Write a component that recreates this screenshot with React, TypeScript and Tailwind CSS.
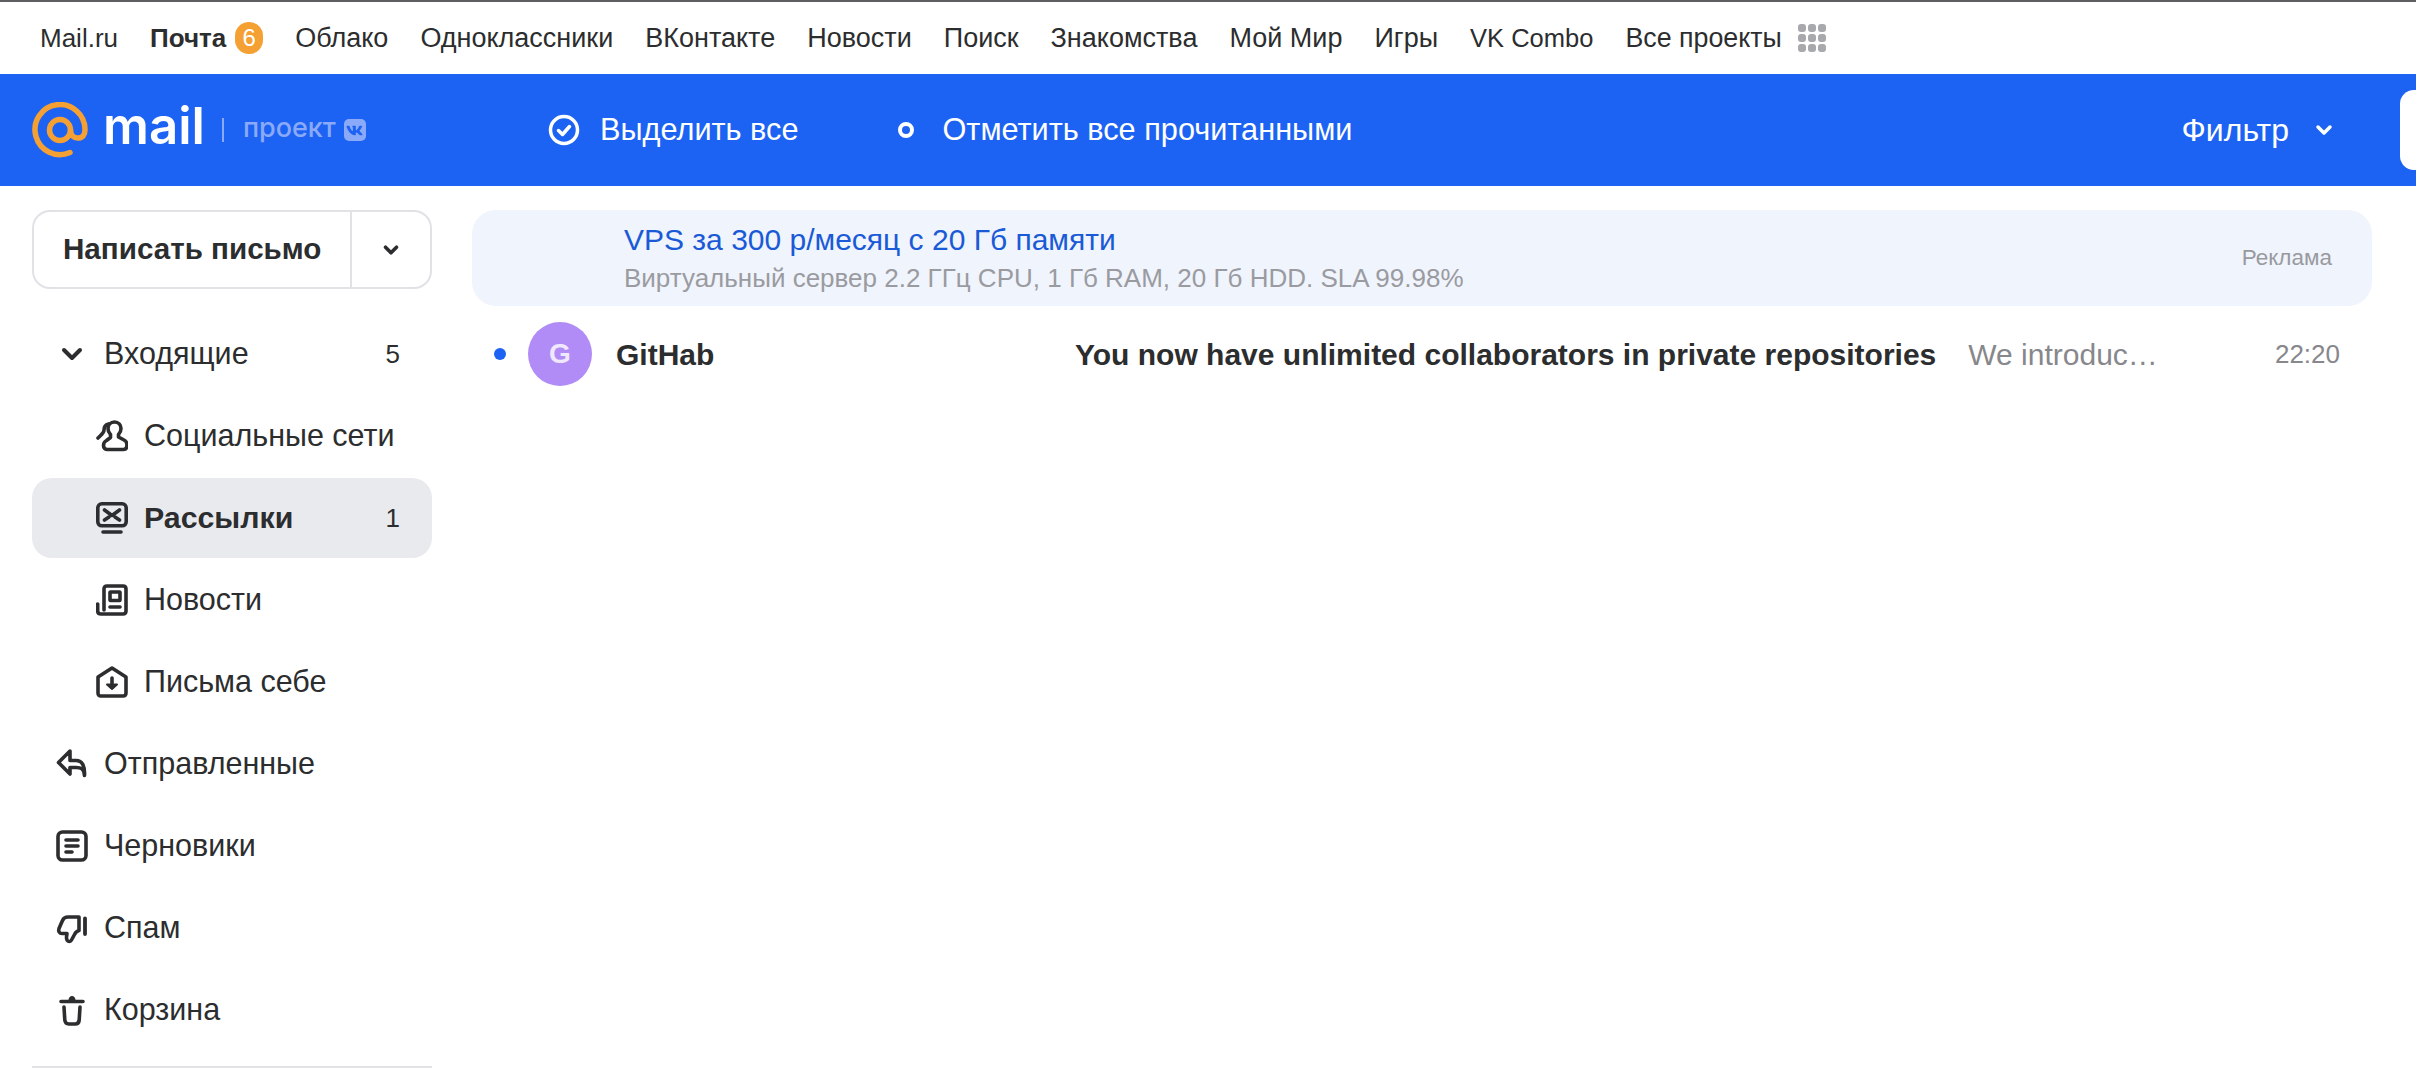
import { ChevronDown } from "lucide-react";
import { FaVk } from "react-icons/fa";

const NAV = [
  { label: "Облако", size: "text-[27px]" },
  { label: "Одноклассники", size: "text-[27px]" },
  { label: "ВКонтакте", size: "text-[27px]" },
  { label: "Новости", size: "text-[27px]" },
  { label: "Поиск", size: "text-[27px]" },
  { label: "Знакомства", size: "text-[27px]" },
  { label: "Мой Мир", size: "text-[27px]" },
  { label: "Игры", size: "text-[27px]" },
  { label: "VK Combo", size: "text-[25.500px]" },
  { label: "Все проекты", size: "text-[26.800px]" },
];

const Icon = ({ children }: { children: React.ReactNode }) => (
  <svg viewBox="0 0 32 32" className="w-8 h-8" fill="none" stroke="#2c2d2e" strokeWidth="3.600" strokeLinejoin="round" strokeLinecap="round">
    {children}
  </svg>
);

const SocialIcon = () => (
  <Icon>
    <path d="M18.500 2c4 0 6.500 3 6.500 6.500 0 2.500-1 4.500-2.500 6v2.500l5.500 3c2 1 3 2.500 3 5 0 3-1.500 4.500-3.500 4.500H11.500c-2.500 0-4-1.500-4-4 0-2.500 1-4 3-5l4-3v-3c-1.500-1.500-2.500-3.500-2.500-6C12 5 14.500 2 18.500 2z" />
    <path d="M12.500 4C9 5 8 7 8 10c0 3-3 5-6 8" />
  </Icon>
);

const MailingIcon = () => (
  <Icon>
    <rect x="1.800" y="1.800" width="28.400" height="22" rx="4" />
    <path d="M8.500 8l7.500 5.500L23.500 8M8.500 18l4.500-3M23.500 18L19 15M7 30h18" />
  </Icon>
);

const NewsIcon = () => (
  <Icon>
    <path d="M8 26V5c0-2 1-3 3-3h16c2 0 3 1 3 3v22c0 2-1 3-3 3H5c-2 0-3.300-1-3.300-3v-7" />
    <rect x="14" y="8" width="10" height="8.500" rx="0.500" />
    <path d="M14 23h10" />
  </Icon>
);

const SelfIcon = () => (
  <Icon>
    <path d="M2 11L16 2l14 9v16c0 2-1 3-3 3H5c-2 0-3-1-3-3V11z" />
    <path d="M16 12v9" />
    <path d="M11 18.500l5 4.500 5-4.500z" fill="#2c2d2e" strokeWidth="2" />
  </Icon>
);

const SentIcon = () => (
  <Icon>
    <path d="M14 3L2.500 14.500 14 26v-6.500h6c5 0 8 1 8.500 8 .5-9-2-15-8.500-15h-6V3z" />
  </Icon>
);

const DraftIcon = () => (
  <Icon>
    <rect x="2" y="2" width="28" height="28" rx="4.500" />
    <path d="M10 10h12M10 16h12M10 22h6" />
  </Icon>
);

const SpamIcon = () => (
  <Icon>
    <path d="M23 5H12C9 5 7.500 6 6.500 8.500l-3.500 8c-1 3 .5 5 3 5H11l-.5 3.500c-.3 2.500 1 4.500 3 4.500 1 0 1.500-.5 2-1.500l3-5.500c1-2 2.500-3.500 4.500-4V5z" />
    <path d="M29 6.500V22" strokeWidth="3.800" />
  </Icon>
);

const TrashIcon = () => (
  <Icon>
    <path d="M5 7.500h22M8 13l.8 13c.2 2.500 1.500 4 4 4h6.400c2.500 0 3.800-1.500 4-4L24 13" />
    <path d="M12.500 6c0-2 1.500-4 3.500-4s3.500 2 3.500 4z" fill="#2c2d2e" stroke="none" />
  </Icon>
);

const SubItem = ({ icon, label, count, active }: { icon: React.ReactNode; label: string; count?: number; active?: boolean }) => (
  <div className={`h-[80px] flex items-center pl-[64px] pr-[32px] rounded-[20px] ${active ? "bg-[#e9eaee] font-bold text-[30.300px]" : "text-[30.500px]"}`}>
    <span className="w-8 mr-[16px] flex shrink-0">{icon}</span>
    <span className="flex-1">{label}</span>
    {count !== undefined && <span className="text-[26px] font-normal">{count}</span>}
  </div>
);

const MainItem = ({ icon, label }: { icon: React.ReactNode; label: string }) => (
  <div className="h-[80px] flex items-center pl-[24px] text-[30.500px]">
    <span className="w-8 mr-[16px] flex shrink-0">{icon}</span>
    <span>{label}</span>
  </div>
);

export default function App() {
  return (
    <div className="w-[2416px] h-[1080px] overflow-hidden bg-white text-[#2c2d2e] font-['Liberation_Sans',Arial,sans-serif]">
      <div className="h-[2px] bg-[#5f5f62]" />
      {/* portal bar */}
      <div className="h-[72px] flex items-center pl-[40px] gap-[32px] text-[#2c2d2e]">
        <span className="text-[26px]">Mail.ru</span>
        <span className="flex items-center gap-[9px]">
          <b className="text-[26px]">Почта</b>
          <span className="w-[28px] h-[32px] rounded-full bg-[#f5a033] text-white text-[24px] flex items-center justify-center">6</span>
        </span>
        {NAV.map((item) => (
          <span key={item.label} className={item.size}>
            {item.label}
          </span>
        ))}
        <div className="-ml-[16px] grid grid-cols-3 gap-[2px]">
          {Array.from({ length: 9 }).map((_, i) => (
            <span key={i} className="w-[8px] h-[8px] rounded-[3px] bg-[#a8a9ad]" />
          ))}
        </div>
      </div>

      {/* blue toolbar */}
      <div className="relative h-[112px] bg-[#1d63f3] flex items-center text-white overflow-hidden">
        <div className="w-[548px] pl-[32px] flex items-center shrink-0">
          <svg viewBox="0 0 56 56" className="w-[56px] h-[56px]" fill="none" stroke="#f5a033" strokeWidth="5.500" strokeLinecap="round">
            <circle cx="28" cy="28" r="10.500" />
            <path d="M38 50.500A25 25 0 1 1 53 28c0 5-2.500 8-7 8-4.500 0-7.500-3-7.500-8" />
          </svg>
          <span className="ml-[15px] text-[51px] leading-none font-semibold font-['Inter',sans-serif] -mt-[10px]">mail</span>
          <span className="ml-[17px] w-[2px] h-[24px] bg-[#8aaaf9]" />
          <span className="ml-[19px] text-[27px] font-medium font-['Inter',sans-serif] text-[#8aaaf9] -mt-[4px]">проект</span>
          <span className="ml-[8px] w-[22px] h-[22px] rounded-[5px] bg-[#8aaaf9] flex items-center justify-center text-[#1d63f3]">
            <FaVk size={17} />
          </span>
        </div>
        <svg viewBox="0 0 32 32" className="w-8 h-8" fill="none" stroke="white" strokeWidth="3.500" strokeLinecap="round" strokeLinejoin="round">
          <circle cx="16" cy="16" r="13.500" />
          <path d="M10.500 16.500l4 4 7-8" />
        </svg>
        <span className="ml-[20px] text-[30.700px]">Выделить все</span>
        <span className="ml-[100px] w-[16px] h-[16px] rounded-full border-[4px] border-white" />
        <span className="ml-[28px] text-[30.700px]">Отметить все прочитанными</span>
        <span className="ml-auto mr-[23px] text-[32px]">Фильтр</span>
        <ChevronDown size={24} strokeWidth={3.500} className="mr-[80px]" />
        <div className="absolute left-[2400px] top-[16px] w-[60px] h-[80px] rounded-[14px] bg-white" />
      </div>

      <div className="flex">
        {/* sidebar */}
        <aside className="w-[400px] ml-[32px] pt-[24px] shrink-0">
          <div className="h-[79px] flex rounded-[18px] border-2 border-[#e1e2e6]">
            <div className="flex-1 flex items-center pl-[29px] text-[29.600px] font-bold border-r-2 border-[#e1e2e6]">Написать письмо</div>
            <div className="w-[78px] flex items-center justify-center">
              <ChevronDown size={22} strokeWidth={4} />
            </div>
          </div>
          <div className="mt-[25px] flex flex-col gap-[2px]">
            <div className="h-[80px] flex items-center pl-[24px] pr-[32px] text-[30.500px]">
              <span className="w-8 mr-[16px] flex shrink-0">
                <ChevronDown size={32} strokeWidth={3} />
              </span>
              <span className="flex-1">Входящие</span>
              <span className="text-[26px]">5</span>
            </div>
            <SubItem icon={<SocialIcon />} label="Социальные сети" />
            <SubItem icon={<MailingIcon />} label="Рассылки" count={1} active />
            <SubItem icon={<NewsIcon />} label="Новости" />
            <SubItem icon={<SelfIcon />} label="Письма себе" />
            <MainItem icon={<SentIcon />} label="Отправленные" />
            <MainItem icon={<DraftIcon />} label="Черновики" />
            <MainItem icon={<SpamIcon />} label="Спам" />
            <MainItem icon={<TrashIcon />} label="Корзина" />
          </div>
          <div className="mt-[16px] h-[2px] bg-[#e1e2e6]" />
        </aside>

        {/* letters */}
        <main className="ml-[40px] w-[1900px] pt-[24px] shrink-0">
          <div className="h-[96px] rounded-[24px] bg-[#f0f4fd] pl-[152px] pr-[40px] flex items-center">
            <div className="flex-1">
              <div className="text-[30px] leading-[36px] text-[#1a5ad7]">VPS за 300 р/месяц с 20 Гб памяти</div>
              <div className="text-[26px] leading-[32px] mt-[4px] text-[#9a9ba0]">Виртуальный сервер 2.2 ГГц CPU, 1 Гб RAM, 20 Гб HDD. SLA 99.98%</div>
            </div>
            <span className="text-[22.500px] text-[#999a9e]">Реклама</span>
          </div>
          <div className="h-[96px] flex items-center pl-[22px] pr-[32px]">
            <span className="w-[12px] h-[12px] rounded-full bg-[#1d63f3] shrink-0" />
            <span className="ml-[22px] w-[64px] h-[64px] rounded-full bg-[#b18cf6] text-[#f0e8fe] text-[28px] font-bold flex items-center justify-center shrink-0">G</span>
            <span className="ml-[24px] w-[459px] text-[30px] font-bold shrink-0">GitHab</span>
            <span className="text-[30px] font-bold shrink-0 text-[#2c2d2e]">You now have unlimited collaborators in private repositories</span>
            <span className="ml-[32px] text-[30px] text-[#87878c]">We introduc…</span>
            <span className="ml-auto text-[26px] text-[#87878c]">22:20</span>
          </div>
        </main>
      </div>
    </div>
  );
}
